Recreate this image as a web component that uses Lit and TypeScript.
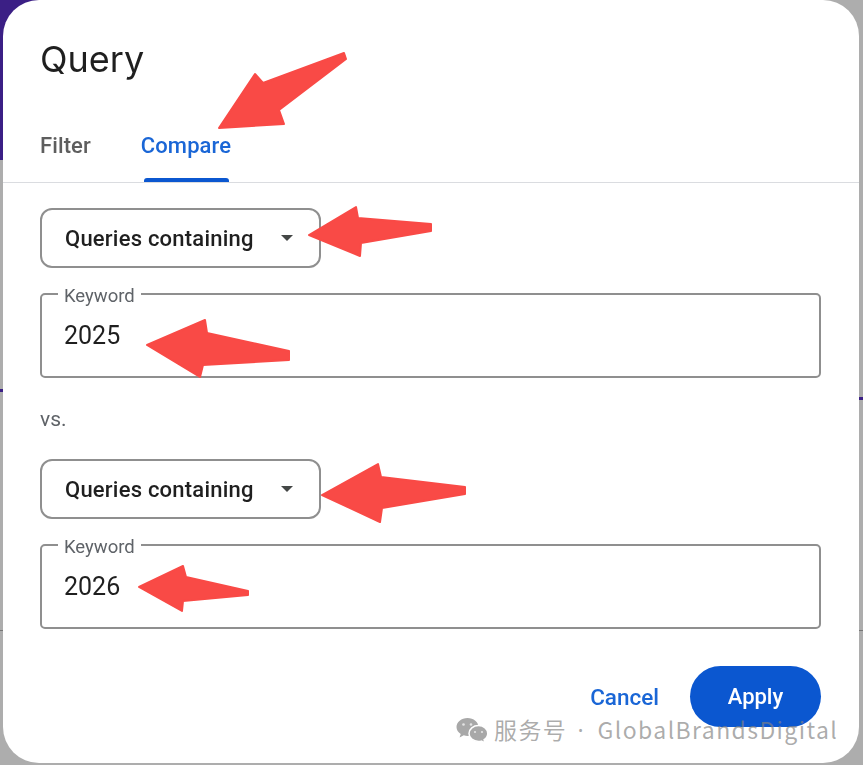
import { LitElement, html, css, svg } from 'lit';
import { customElement } from 'lit/decorators.js';

const ARROWS = [
    '219,128 255,74 263,83 344,53 346,59 279,110 284,124',
    '309,235 356,207 358,218 431,224 431,231 361,243 360,256',
    '147,345 205,320 207,333 289,351 289,360 203,365 200,377',
    '322,495 378,464 381,477 465,487 465,494 382,508 380,522',
    '139,587 183,566 186,577 248,591 248,595 183,601 182,611',
];

@customElement('app-root')
class AppRoot extends LitElement {
    static styles = css`
        :host {
            display: block;
            position: relative;
            height: 765px;
            overflow: hidden;
            font-family: Roboto, 'Liberation Sans', sans-serif;
            background:
                linear-gradient(#3b1f85, #3b1f85) 0 0 / 50px 160px no-repeat,
                linear-gradient(#3b1f85, #3b1f85) 0 389px / 4px 3px no-repeat,
                linear-gradient(#3b1f85, #3b1f85) 100% 397px / 5px 3px no-repeat,
                linear-gradient(#777, #777) 0 630px / 100% 1px no-repeat,
                #adadad;
        }

        .dialog {
            box-sizing: border-box;
            height: 763px;
            margin: 0 4px 0 3px;
            background: #fff;
            border-radius: 36px;
            display: flex;
            flex-direction: column;
            filter: blur(0.4px);
        }

        h2 {
            margin: 0;
            padding: 36px 0 0 37px;
            height: 88px;
            box-sizing: border-box;
            font-family: Inter, Roboto, sans-serif;
            font-size: 36px;
            line-height: 46px;
            font-weight: 400;
            color: #1f1f1f;
        }

        .tabs {
            display: flex;
            height: 95px;
            box-sizing: border-box;
            padding: 0 0 0 37px;
            border-bottom: 1px solid #dadce0;
        }

        .tab {
            font-size: 22px;
            font-weight: 500;
            letter-spacing: 0.1px;
            line-height: 28px;
            padding-top: 44px;
            color: #5e5e5e;
            margin-right: 50px;
            position: relative;
        }

        .tab.active {
            color: #1a66d6;
        }

        .tab.active::after {
            content: '';
            position: absolute;
            left: 3px;
            right: 2px;
            bottom: 0;
            height: 4px;
            border-radius: 3px 3px 0 0;
            background: #0b57d0;
        }

        .body {
            flex: 1;
            padding: 25px 38px 0 37px;
            display: flex;
            flex-direction: column;
        }

        .select {
            box-sizing: border-box;
            width: 281px;
            height: 60px;
            border: 2px solid #8f8f8f;
            border-radius: 12px;
            display: flex;
            align-items: center;
            padding: 0 23px;
            font-size: 22px;
            letter-spacing: 0.22px;
            font-weight: 500;
            color: #1f1f1f;
        }

        .select span {
            flex: 1;
        }

        .caret {
            width: 0;
            height: 0;
            border-left: 6px solid transparent;
            border-right: 6px solid transparent;
            border-top: 6px solid #444746;
            margin-right: 3px;
        }

        .field {
            box-sizing: border-box;
            position: relative;
            height: 85px;
            margin-top: 25px;
            border: 2px solid #8f8f8f;
            border-radius: 5px;
            padding: 24px 22px 0;
            font-size: 25px;
            line-height: 34px;
            color: #1f1f1f;
        }

        .field label {
            position: absolute;
            left: 16px;
            top: -9px;
            padding: 0 6px;
            background: #fff;
            font-size: 18.5px;
            line-height: 20px;
            color: #5f6368;
        }

        .vs {
            font-size: 21px;
            line-height: 28px;
            color: #5f6368;
            margin: 27px 0 26px;
        }

        .actions {
            display: flex;
            justify-content: flex-end;
            align-items: center;
            gap: 31px;
            margin-top: 37px;
        }

        .cancel {
            font-size: 22.5px;
            font-weight: 500;
            color: #1a66d6;
        }

        .apply {
            width: 131px;
            height: 61px;
            border-radius: 31px;
            background: #0b57d0;
            color: #fff;
            font-size: 22px;
            font-weight: 500;
            display: flex;
            align-items: center;
            justify-content: center;
        }

        .arrows {
            position: absolute;
            inset: 0;
            pointer-events: none;
        }

        .arrows polygon {
            fill: #f94a46;
            stroke: #f94a46;
            stroke-width: 2;
            stroke-linejoin: round;
        }

        .watermark {
            position: absolute;
            left: 456px;
            top: 714px;
            display: flex;
            align-items: center;
            gap: 6px;
            font-family: 'Noto Sans CJK SC', 'Noto Sans', sans-serif;
            font-size: 23px;
            line-height: 30px;
            letter-spacing: 1.4px;
            white-space: nowrap;
            color: rgba(130, 130, 130, 0.66);
        }

        .watermark .dot {
            font-family: 'Noto Sans', sans-serif;
            margin: 0 5px 0 3px;
        }

        .watermark svg {
            width: 32px;
            height: 26px;
        }
    `;

    renderSelect() {
        return html`
            <div class="select">
                <span>Queries containing</span>
                <div class="caret"></div>
            </div>
        `;
    }

    renderField(value: string) {
        return html`
            <div class="field">
                <label>Keyword</label>
                ${value}
            </div>
        `;
    }

    render() {
        return html`
            <div class="dialog">
                <h2>Query</h2>
                <div class="tabs">
                    <div class="tab">Filter</div>
                    <div class="tab active">Compare</div>
                </div>
                <div class="body">
                    ${this.renderSelect()} ${this.renderField('2025')}
                    <div class="vs">vs.</div>
                    ${this.renderSelect()} ${this.renderField('2026')}
                    <div class="actions">
                        <div class="cancel">Cancel</div>
                        <div class="apply">Apply</div>
                    </div>
                </div>
            </div>
            <svg class="arrows" width="863" height="765">
                ${ARROWS.map((points) => svg`<polygon points=${points}></polygon>`)}
            </svg>
            <div class="watermark">
                <svg viewBox="0 0 32 26">
                    <path
                        fill="#a8a8a8"
                        d="M11.500 1C5.400 1 .5 5 .5 10c0 2.900 1.600 5.300 4.200 7L3.600 20.500l4.200-2.200c1.200.4 2.400.6 3.700.6 6.100 0 11-4 11-8.900S17.600 1 11.500 1z"
                    ></path>
                    <path
                        fill="#a8a8a8"
                        stroke="#fff"
                        stroke-width="1.500"
                        d="M22.500 8.500c-5.200 0-9.500 3.500-9.500 8s4.300 8 9.500 8c1 0 2-.1 2.900-.4l3.600 1.900-.9-3.300c2.300-1.500 3.700-3.700 3.700-6.200 0-4.500-4.100-8-9.300-8z"
                    ></path>
                    <circle cx="7.500" cy="7.500" r="1.300" fill="#e4e4e4"></circle>
                    <circle cx="15" cy="7.500" r="1.300" fill="#e4e4e4"></circle>
                    <circle cx="19" cy="15" r="1.100" fill="#e4e4e4"></circle>
                    <circle cx="26" cy="15" r="1.100" fill="#e4e4e4"></circle>
                </svg>
                <span>服务号<span class="dot"> · </span>GlobalBrandsDigital</span>
            </div>
        `;
    }
}

declare global {
    interface HTMLElementTagNameMap {
        'app-root': AppRoot;
    }
}
